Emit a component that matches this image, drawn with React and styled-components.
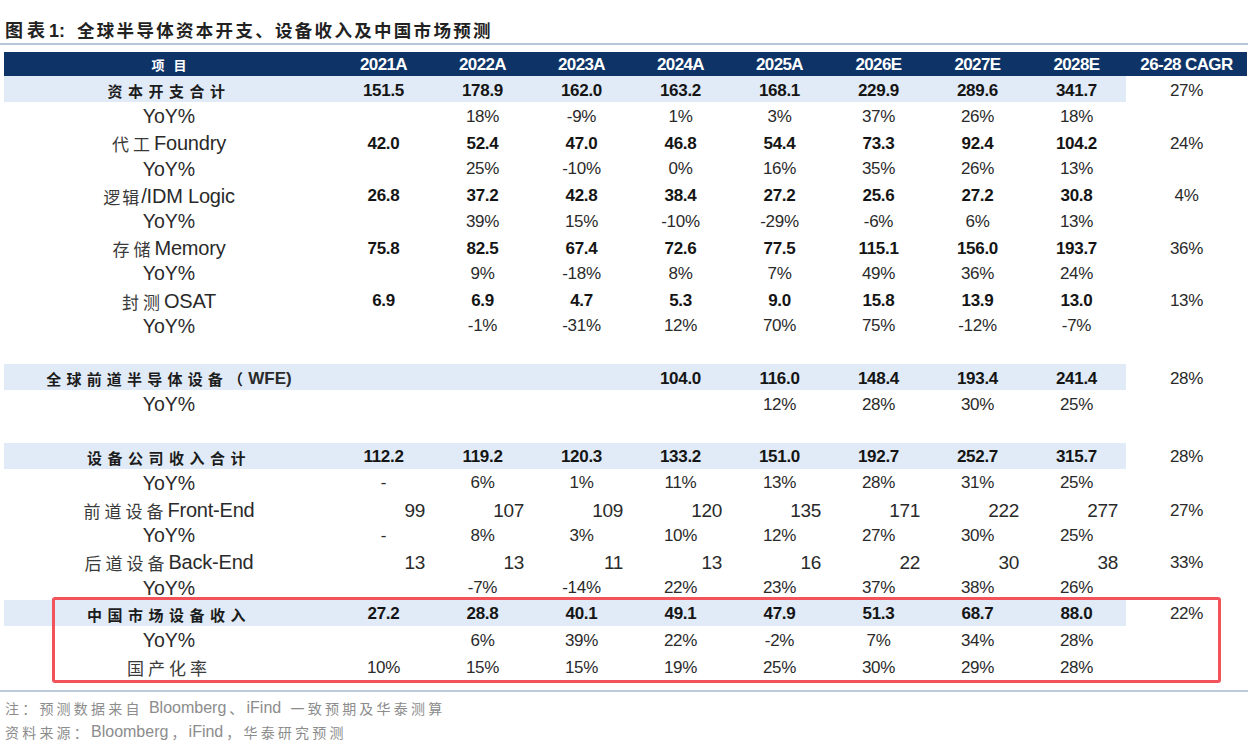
import React from 'react';
import styled, { createGlobalStyle } from 'styled-components';

const GlobalStyle = createGlobalStyle`
    html, body {
        margin: 0;
        padding: 0;
        background: #ffffff;
    }
    body {
        font-family: "Liberation Sans", Arial, "Noto Sans CJK SC", sans-serif;
        color: #1c1c1c;
    }
`;

const CJK = `"Noto Sans CJK SC", "Noto Sans", sans-serif`;
const LATIN = `"Liberation Sans", Arial, "Noto Sans CJK SC", sans-serif`;

const Page = styled.div`
    width: 1248px;
    padding-top: 15px;
`;

const TitleBar = styled.div`
    display: flex;
    align-items: center;
    gap: 12px;
    height: 28px;
    padding-left: 5px;
    border-bottom: 2px solid #b7c6d8;
    font-weight: 700;
    color: #222;
`;

const TitleTag = styled.span`
    font-family: ${CJK};
    font-size: 18px;
    letter-spacing: 4px;

    b {
        font-family: ${LATIN};
        font-size: 18px;
        letter-spacing: 0;
    }
`;

const TitleText = styled.span`
    font-family: ${CJK};
    font-size: 17.5px;
    letter-spacing: 2.3px;
`;

const Table = styled.div`
    margin: 7px 1px 0 4px;
    display: flex;
    flex-direction: column;
`;

const Grid = styled.div`
    display: grid;
    grid-template-columns: 330px repeat(8, 99px) 1fr;
    align-items: stretch;
    height: ${p => p.$height || 26.2}px;
`;

const HeadRow = styled(Grid)`
    background: #0e3467;
    color: #ffffff;
    font-weight: 700;
`;

const HeadCell = styled.div`
    display: flex;
    align-items: center;
    justify-content: center;
    padding-top: 1px;
    font-family: ${LATIN};
    font-size: 17px;
    letter-spacing: -0.6px;
`;

const HeadLabel = styled(HeadCell)`
    font-family: ${CJK};
    font-size: 13px;
    letter-spacing: 9px;
    padding-left: 9px;
`;

const Cell = styled.div`
    display: flex;
    align-items: center;
    justify-content: ${p => (p.$align === 'right' ? 'flex-end' : 'center')};
    padding-top: 3px;
    padding-right: ${p => (p.$align === 'right' ? '8px' : '0')};
    background: ${p => (p.$band ? '#e1ebf7' : 'transparent')};
    font-family: ${LATIN};
    font-size: ${p => p.$size || 17}px;
    font-weight: ${p => (p.$bold ? 700 : 400)};
    color: ${p => (p.$bold ? '#151515' : '#2a2a2a')};
    letter-spacing: -0.3px;
    white-space: nowrap;
`;

const LabelCell = styled(Cell)`
    font-size: 19.5px;
    letter-spacing: 0;
    color: #2a2a2a;
`;

const Zh = styled.span`
    font-family: ${CJK};
    font-size: ${p => (p.$bold ? 15 : 17)}px;
    font-weight: ${p => (p.$bold ? 700 : 400)};
    letter-spacing: ${p => p.$spacing ?? 5}px;
    color: ${p => (p.$bold ? '#1c1c1c' : '#3a3a3a')};
`;

const En = styled.span`
    font-family: ${LATIN};
    font-size: ${p => p.$size || 20}px;
    font-weight: ${p => (p.$bold ? 700 : 400)};
    letter-spacing: ${p => (p.$bold ? 0 : -0.2)}px;
`;

const Group = styled.div`
    position: relative;
    display: flex;
    flex-direction: column;
`;

const Highlight = styled.div`
    position: absolute;
    left: 48px;
    right: 26px;
    top: -3px;
    bottom: -5px;
    border: 3px solid #f2525a;
    border-radius: 3px;
    pointer-events: none;
`;

const Footer = styled.div`
    margin-top: 12px;
    border-top: 2px solid #bccadb;
    padding: 4px 0 0 5px;
    display: flex;
    flex-direction: column;
`;

const Note = styled.div`
    height: 24px;
    display: flex;
    align-items: center;
    color: #8c8c8c;
    white-space: pre;
`;

const NoteZh = styled.span`
    font-family: ${CJK};
    font-size: 14px;
    letter-spacing: 3.2px;
`;

const NoteEn = styled.span`
    font-family: ${LATIN};
    font-size: 16px;
    margin-right: 3px;
`;

const years = ['2021A', '2022A', '2023A', '2024A', '2025A', '2026E', '2027E', '2028E'];

const rows = [
    { kind: 'band', zh: '资本开支合计', values: ['151.5', '178.9', '162.0', '163.2', '168.1', '229.9', '289.6', '341.7'], cagr: '27%' },
    { kind: 'yoy', values: ['', '18%', '-9%', '1%', '3%', '37%', '26%', '18%'] },
    { kind: 'sub', zh: '代工', en: ' Foundry', values: ['42.0', '52.4', '47.0', '46.8', '54.4', '73.3', '92.4', '104.2'], cagr: '24%' },
    { kind: 'yoy', values: ['', '25%', '-10%', '0%', '16%', '35%', '26%', '13%'] },
    { kind: 'sub', zh: '逻辑', en: '/IDM Logic', tight: true, values: ['26.8', '37.2', '42.8', '38.4', '27.2', '25.6', '27.2', '30.8'], cagr: '4%' },
    { kind: 'yoy', values: ['', '39%', '15%', '-10%', '-29%', '-6%', '6%', '13%'] },
    { kind: 'sub', zh: '存储', en: ' Memory', values: ['75.8', '82.5', '67.4', '72.6', '77.5', '115.1', '156.0', '193.7'], cagr: '36%' },
    { kind: 'yoy', values: ['', '9%', '-18%', '8%', '7%', '49%', '36%', '24%'] },
    { kind: 'sub', zh: '封测', en: ' OSAT', values: ['6.9', '6.9', '4.7', '5.3', '9.0', '15.8', '13.9', '13.0'], cagr: '13%' },
    { kind: 'yoy', values: ['', '-1%', '-31%', '12%', '70%', '75%', '-12%', '-7%'] },
    { kind: 'blank' },
    { kind: 'band', zh: '全球前道半导体设备（', en: 'WFE)', values: ['', '', '', '104.0', '116.0', '148.4', '193.4', '241.4'], cagr: '28%' },
    { kind: 'yoy', values: ['', '', '', '', '12%', '28%', '30%', '25%'] },
    { kind: 'blank' },
    { kind: 'band', zh: '设备公司收入合计', values: ['112.2', '119.2', '120.3', '133.2', '151.0', '192.7', '252.7', '315.7'], cagr: '28%' },
    { kind: 'yoy', values: ['-', '6%', '1%', '11%', '13%', '28%', '31%', '25%'] },
    { kind: 'plain', zh: '前道设备', en: ' Front-End', values: ['99', '107', '109', '120', '135', '171', '222', '277'], cagr: '27%' },
    { kind: 'yoy', values: ['-', '8%', '3%', '10%', '12%', '27%', '30%', '25%'] },
    { kind: 'plain', zh: '后道设备', en: ' Back-End', values: ['13', '13', '11', '13', '16', '22', '30', '38'], cagr: '33%' },
    { kind: 'yoy', values: ['', '-7%', '-14%', '22%', '23%', '37%', '38%', '26%'] },
];

const china = [
    { kind: 'band', zh: '中国市场设备收入', values: ['27.2', '28.8', '40.1', '49.1', '47.9', '51.3', '68.7', '88.0'], cagr: '22%' },
    { kind: 'yoy', values: ['', '6%', '39%', '22%', '-2%', '7%', '34%', '28%'] },
    { kind: 'rate', zh: '国产化率', values: ['10%', '15%', '15%', '19%', '25%', '30%', '29%', '28%'] },
];

function Label({ row }) {
    if (row.kind === 'yoy') return <LabelCell>YoY%</LabelCell>;
    if (row.kind === 'band') {
        return (
            <LabelCell $band>
                <Zh $bold $spacing={row.en ? 5.2 : 5.5}>{row.zh}</Zh>
                {row.en && <En $bold $size={17}>{row.en}</En>}
            </LabelCell>
        );
    }
    if (row.kind === 'rate') {
        return (
            <LabelCell>
                <Zh $spacing={4}>{row.zh}</Zh>
            </LabelCell>
        );
    }
    return (
        <LabelCell>
            <Zh $spacing={row.tight ? 2 : 4}>{row.zh}</Zh>
            <En>{row.en}</En>
        </LabelCell>
    );
}

function Row({ row }) {
    if (row.kind === 'blank') return <Grid />;
    const band = row.kind === 'band';
    const bold = band || row.kind === 'sub';
    const right = row.kind === 'plain';
    return (
        <Grid>
            <Label row={row} />
            {row.values.map((v, i) => (
                <Cell key={i} $band={band} $bold={bold} $align={right ? 'right' : 'center'} $size={right ? 19 : 17}>
                    {v}
                </Cell>
            ))}
            <Cell>{row.cagr || ''}</Cell>
        </Grid>
    );
}

export default function App() {
    return (
        <Page>
            <GlobalStyle />
            <TitleBar>
                <TitleTag>图表<b>1:</b></TitleTag>
                <TitleText>全球半导体资本开支、设备收入及中国市场预测</TitleText>
            </TitleBar>
            <Table>
                <HeadRow $height={24}>
                    <HeadLabel>项目</HeadLabel>
                    {years.map(y => (
                        <HeadCell key={y}>{y}</HeadCell>
                    ))}
                    <HeadCell>26-28 CAGR</HeadCell>
                </HeadRow>
                {rows.map((row, i) => (
                    <Row key={i} row={row} />
                ))}
                <Group>
                    {china.map((row, i) => (
                        <Row key={i} row={row} />
                    ))}
                    <Highlight />
                </Group>
            </Table>
            <Footer>
                <Note>
                    <NoteZh>注：预测数据来自 </NoteZh>
                    <NoteEn>Bloomberg</NoteEn>
                    <NoteZh>、</NoteZh>
                    <NoteEn>iFind</NoteEn>
                    <NoteZh> 一致预期及华泰测算</NoteZh>
                </Note>
                <Note>
                    <NoteZh>资料来源：</NoteZh>
                    <NoteEn>Bloomberg</NoteEn>
                    <NoteZh>，</NoteZh>
                    <NoteEn>iFind</NoteEn>
                    <NoteZh>，华泰研究预测</NoteZh>
                </Note>
            </Footer>
        </Page>
    );
}
